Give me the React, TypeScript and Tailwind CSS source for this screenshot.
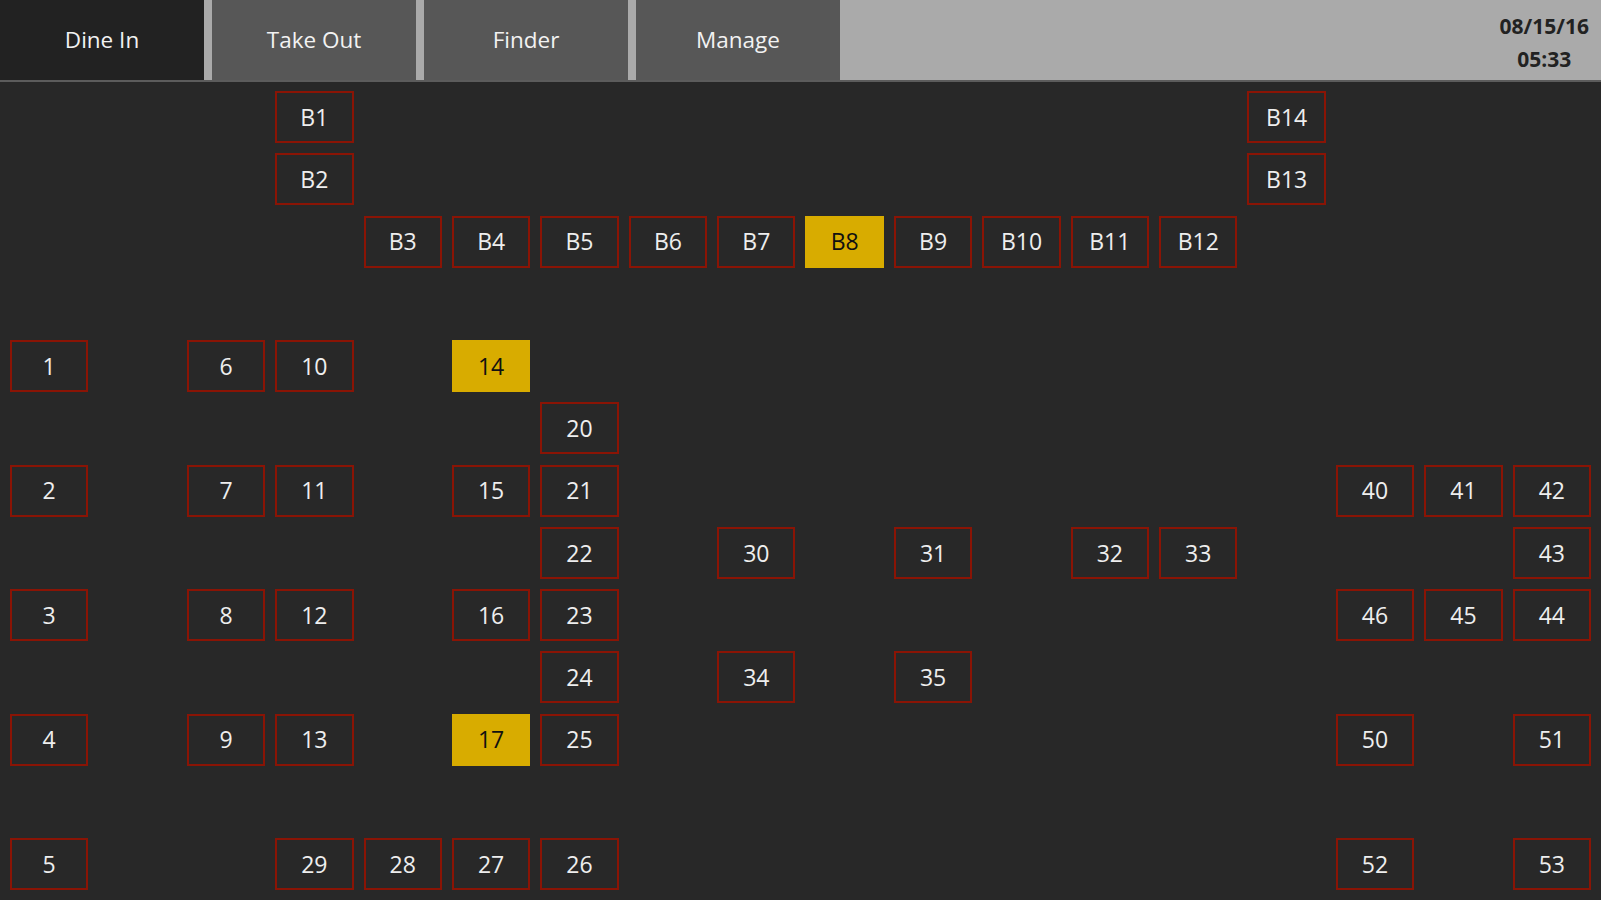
import React from 'react';

type Table = { label: string; row: string; col: string; busy?: boolean };

// row/col classes are written out so Tailwind picks them up
const tables: Table[] = [
  { label: 'B1', row: 'row-start-1', col: 'col-start-4' },
  { label: 'B14', row: 'row-start-1', col: 'col-start-15' },
  { label: 'B2', row: 'row-start-2', col: 'col-start-4' },
  { label: 'B13', row: 'row-start-2', col: 'col-start-15' },
  { label: 'B3', row: 'row-start-3', col: 'col-start-5' },
  { label: 'B4', row: 'row-start-3', col: 'col-start-6' },
  { label: 'B5', row: 'row-start-3', col: 'col-start-7' },
  { label: 'B6', row: 'row-start-3', col: 'col-start-8' },
  { label: 'B7', row: 'row-start-3', col: 'col-start-9' },
  { label: 'B8', row: 'row-start-3', col: 'col-start-10', busy: true },
  { label: 'B9', row: 'row-start-3', col: 'col-start-11' },
  { label: 'B10', row: 'row-start-3', col: 'col-start-12' },
  { label: 'B11', row: 'row-start-3', col: 'col-start-13' },
  { label: 'B12', row: 'row-start-3', col: 'col-start-14' },

  { label: '1', row: 'row-start-5', col: 'col-start-1' },
  { label: '6', row: 'row-start-5', col: 'col-start-3' },
  { label: '10', row: 'row-start-5', col: 'col-start-4' },
  { label: '14', row: 'row-start-5', col: 'col-start-6', busy: true },

  { label: '20', row: 'row-start-6', col: 'col-start-7' },

  { label: '2', row: 'row-start-7', col: 'col-start-1' },
  { label: '7', row: 'row-start-7', col: 'col-start-3' },
  { label: '11', row: 'row-start-7', col: 'col-start-4' },
  { label: '15', row: 'row-start-7', col: 'col-start-6' },
  { label: '21', row: 'row-start-7', col: 'col-start-7' },
  { label: '40', row: 'row-start-7', col: 'col-start-16' },
  { label: '41', row: 'row-start-7', col: 'col-start-17' },
  { label: '42', row: 'row-start-7', col: 'col-start-18' },

  { label: '22', row: 'row-start-8', col: 'col-start-7' },
  { label: '30', row: 'row-start-8', col: 'col-start-9' },
  { label: '31', row: 'row-start-8', col: 'col-start-11' },
  { label: '32', row: 'row-start-8', col: 'col-start-13' },
  { label: '33', row: 'row-start-8', col: 'col-start-14' },
  { label: '43', row: 'row-start-8', col: 'col-start-18' },

  { label: '3', row: 'row-start-9', col: 'col-start-1' },
  { label: '8', row: 'row-start-9', col: 'col-start-3' },
  { label: '12', row: 'row-start-9', col: 'col-start-4' },
  { label: '16', row: 'row-start-9', col: 'col-start-6' },
  { label: '23', row: 'row-start-9', col: 'col-start-7' },
  { label: '46', row: 'row-start-9', col: 'col-start-16' },
  { label: '45', row: 'row-start-9', col: 'col-start-17' },
  { label: '44', row: 'row-start-9', col: 'col-start-18' },

  { label: '24', row: 'row-start-10', col: 'col-start-7' },
  { label: '34', row: 'row-start-10', col: 'col-start-9' },
  { label: '35', row: 'row-start-10', col: 'col-start-11' },

  { label: '4', row: 'row-start-11', col: 'col-start-1' },
  { label: '9', row: 'row-start-11', col: 'col-start-3' },
  { label: '13', row: 'row-start-11', col: 'col-start-4' },
  { label: '17', row: 'row-start-11', col: 'col-start-6', busy: true },
  { label: '25', row: 'row-start-11', col: 'col-start-7' },
  { label: '50', row: 'row-start-11', col: 'col-start-16' },
  { label: '51', row: 'row-start-11', col: 'col-start-18' },

  { label: '5', row: 'row-start-13', col: 'col-start-1' },
  { label: '29', row: 'row-start-13', col: 'col-start-4' },
  { label: '28', row: 'row-start-13', col: 'col-start-5' },
  { label: '27', row: 'row-start-13', col: 'col-start-6' },
  { label: '26', row: 'row-start-13', col: 'col-start-7' },
  { label: '52', row: 'row-start-13', col: 'col-start-16' },
  { label: '53', row: 'row-start-13', col: 'col-start-18' },
];

const tabs = ['Dine In', 'Take Out', 'Finder', 'Manage'];

export default function App() {
  return (
    <div
      className="w-[1601px] h-[900px] overflow-hidden bg-[#282828] flex flex-col"
      style={{ fontFamily: '"Open Sans", "Noto Sans", sans-serif' }}
    >
      {/* Top bar */}
      <header className="h-[82px] shrink-0 bg-[#aaaaaa] border-b-2 border-[#5c5c5c] flex">
        <div className="flex gap-[8px]">
          {tabs.map((t, i) => (
            <button
              key={t}
              className={
                'w-[204px] h-full flex items-center justify-center text-[22.5px] text-[#f2f2f2] ' +
                (i === 0 ? 'bg-[#222222]' : 'bg-[#575757]')
              }
            >
              {t}
            </button>
          ))}
        </div>
        <div className="flex-1" />
        <div className="pr-[12px] pt-[10px] flex flex-col items-center font-bold text-[21px] leading-[33px] text-[#222222]">
          <span>08/15/16</span>
          <span>05:33</span>
        </div>
      </header>

      {/* Floor plan */}
      <main className="grid grid-cols-[repeat(18,1fr)] grid-rows-[repeat(13,52px)] gap-x-[10px] gap-y-[10.25px] px-[10px] pt-[9px]">
        {tables.map((t) => (
          <div
            key={t.label}
            className={
              t.row +
              ' ' +
              t.col +
              ' flex items-center justify-center text-[23px] ' +
              (t.busy
                ? 'bg-[#d8ac00] text-[#111111]'
                : 'border-2 border-[#8a1405] text-[#eeeeee]')
            }
          >
            {t.label}
          </div>
        ))}
      </main>
    </div>
  );
}
